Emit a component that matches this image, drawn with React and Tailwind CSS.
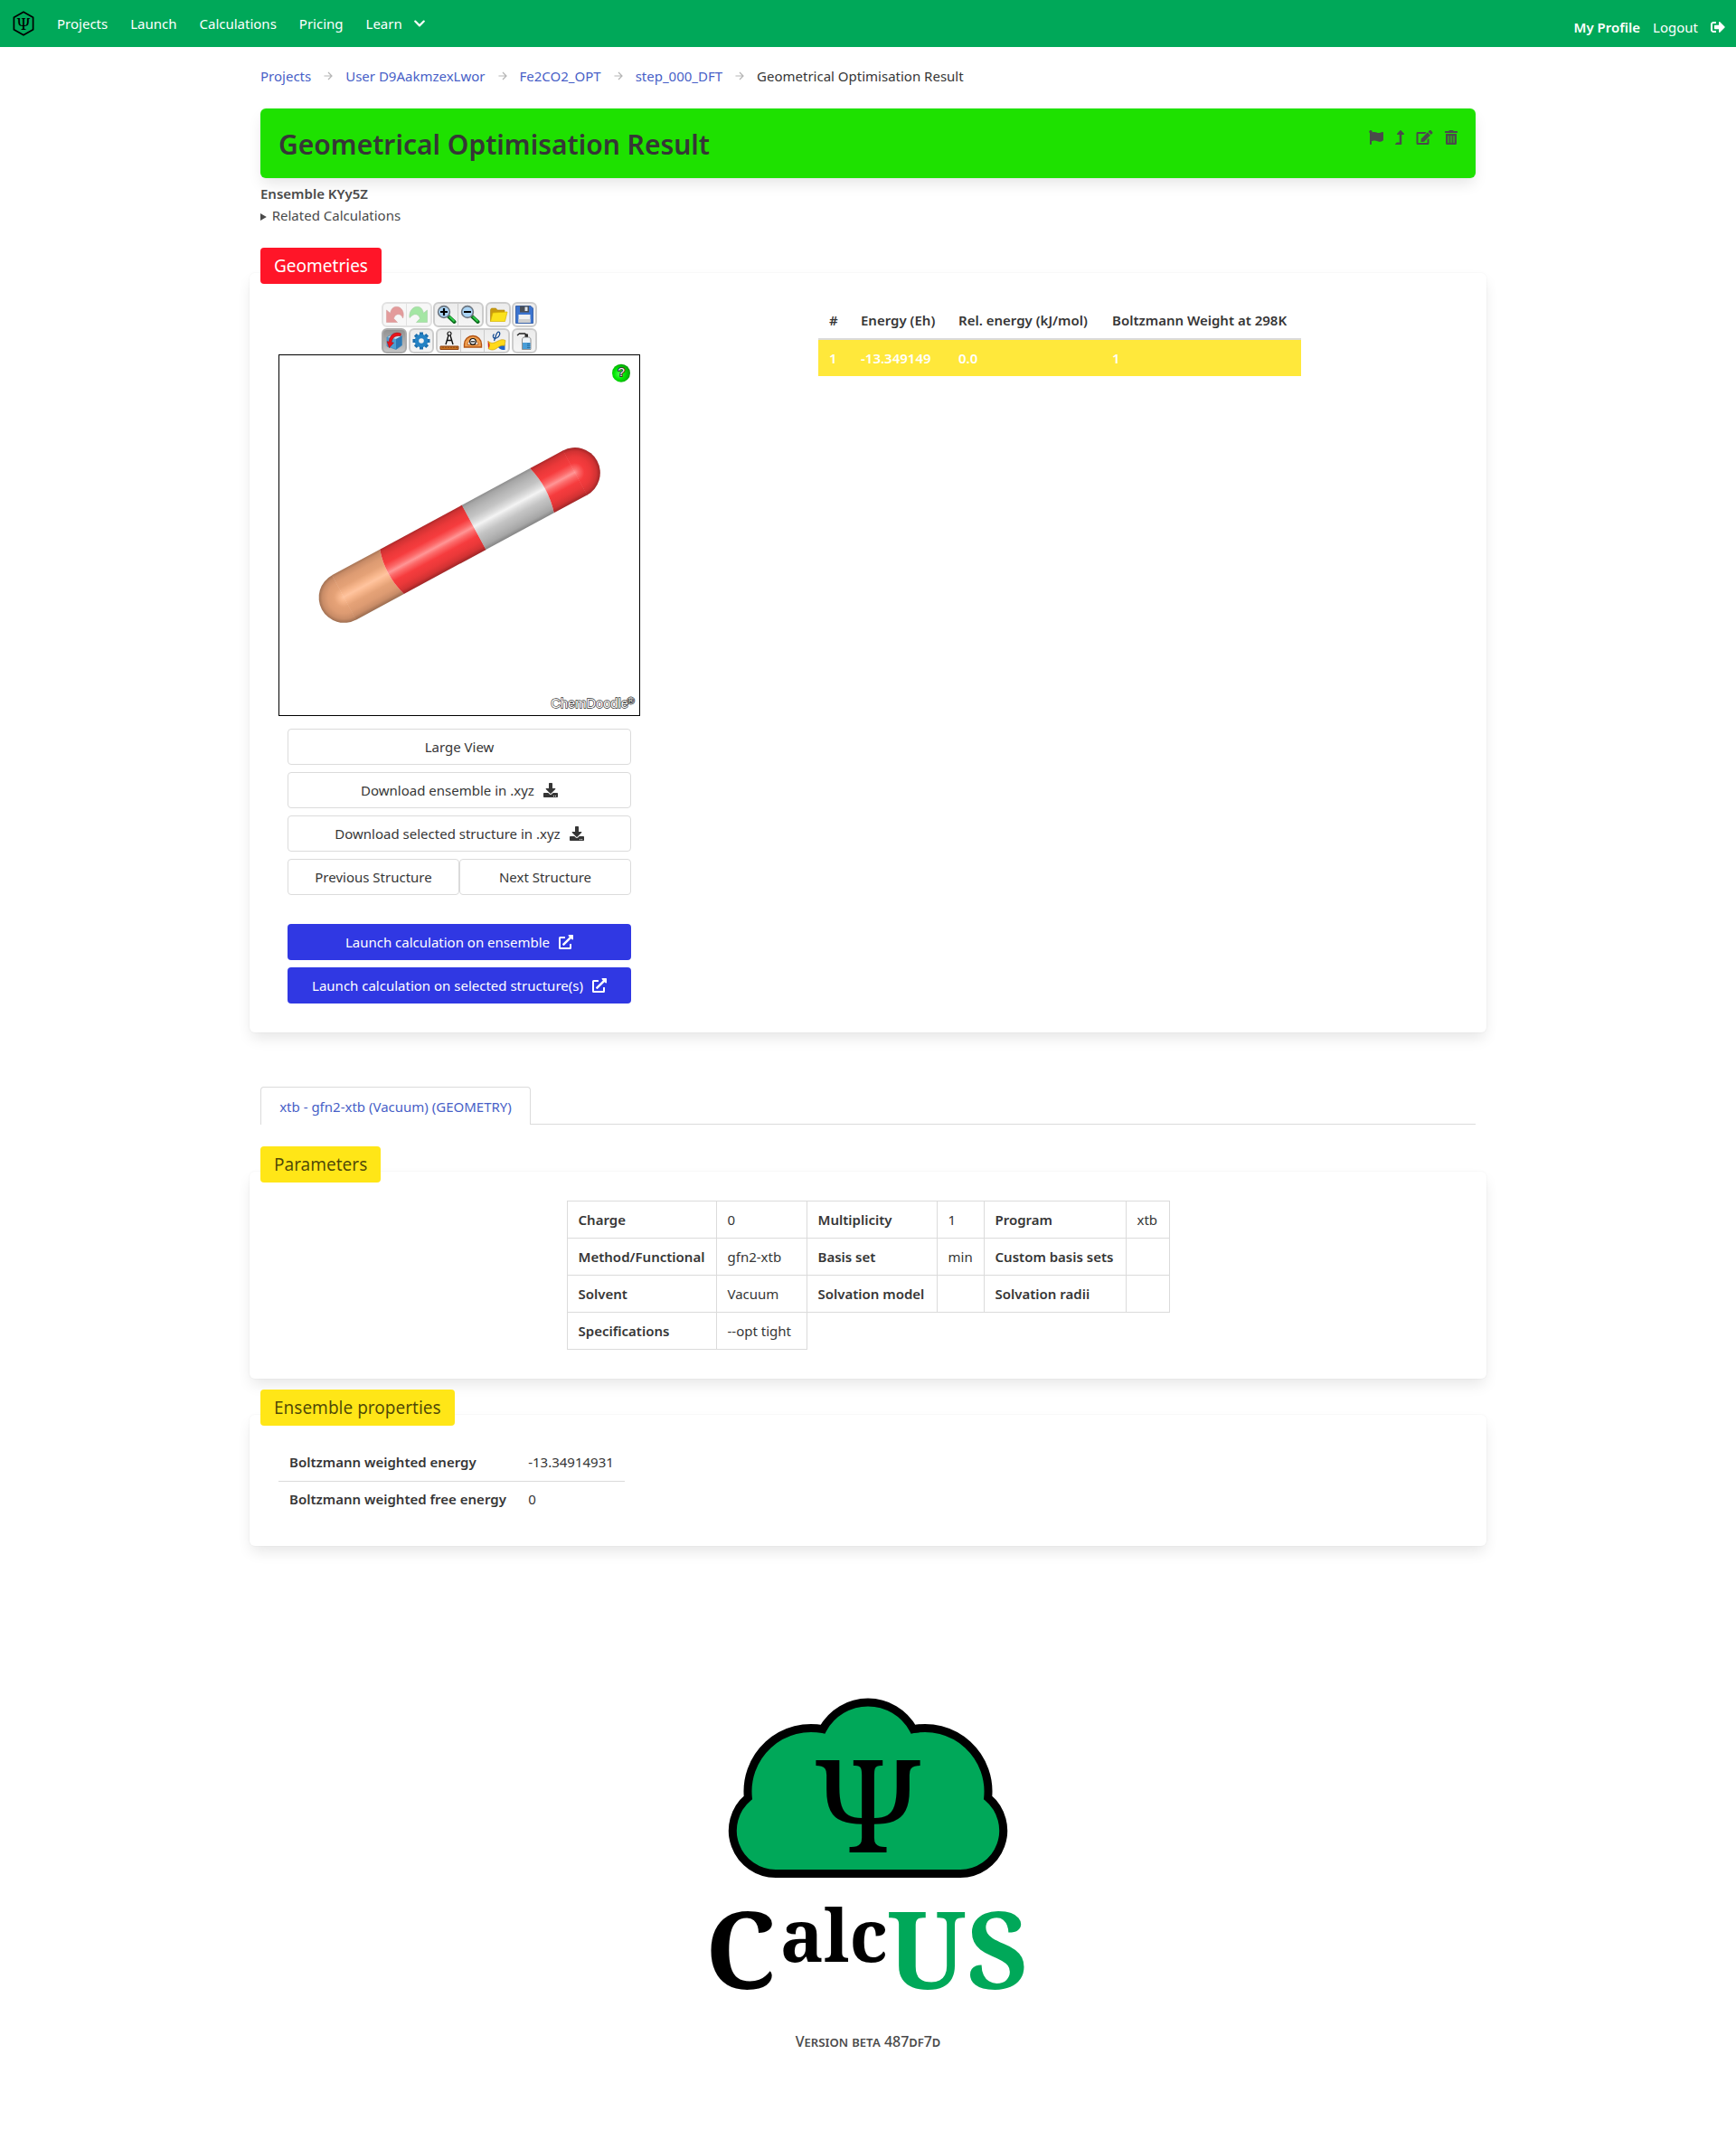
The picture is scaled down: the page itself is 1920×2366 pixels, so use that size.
import React from "react";
import {
  FaChevronDown,
  FaDownload,
  FaEdit,
  FaExternalLinkAlt,
  FaFlag,
  FaLevelUpAlt,
  FaSignOutAlt,
  FaTrashAlt,
} from "react-icons/fa";

function NavLogo() {
  return (
    <svg viewBox="0 0 24 28" className="h-7 w-6" aria-hidden="true">
      <path d="M12 1.2 22.6 7.3V20.700L12 26.800 1.400 20.700V7.300Z" fill="none" stroke="#000" strokeWidth="1.700" strokeLinejoin="round" />
      <text x="12" y="20.500" textAnchor="middle" fontSize="18" fontFamily="Noto Serif, Liberation Serif, serif">Ψ</text>
    </svg>
  );
}

function UndoIcon() {
  return (
    <svg viewBox="0 0 22 22" className="size-[22px] opacity-45">
      <path d="M1.500 6v13.500h12l-4-4.200c.8-3.300 3-5 5.800-4.600 2.200.4 3.600 2 4.200 4.300C22 8.500 18 1.700 11.800 2.300 8.500 2.600 6.300 5.500 5.600 9.400Z" fill="#c92b2b" stroke="#a33" strokeWidth=".6" />
    </svg>
  );
}

function RedoIcon() {
  return (
    <svg viewBox="0 0 22 22" className="size-[22px] opacity-45">
      <path d="M20.500 6v13.500h-12l4-4.200c-.8-3.300-3-5-5.800-4.600C4.500 11.100 3.100 12.700 1 14.500 0 8.500 4 1.700 10.200 2.300c3.300.3 5.500 3.200 6.200 7.100Z" fill="#3fd03f" stroke="#3a9a3a" strokeWidth=".6" />
    </svg>
  );
}

function ZoomIcon({ plus }) {
  return (
    <svg viewBox="0 0 22 22" className="size-[22px]">
      <path d="m13 13 6.500 6" stroke="#0b6b1c" strokeWidth="4" strokeLinecap="round" />
      <path d="m14.500 13.700 4.500 4.300" stroke="#2fd04a" strokeWidth="1.800" strokeLinecap="round" />
      <circle cx="8" cy="8" r="6.400" fill="#a9d4f5" stroke="#6d7680" strokeWidth="1.600" />
      <path d={plus ? "M8 4v8M4 8h8" : "M4 8h8"} stroke="#000" strokeWidth="2.200" />
    </svg>
  );
}

function FolderIcon() {
  return (
    <svg viewBox="0 0 22 22" className="size-[22px]">
      <path d="M2.500 18.500V5.500l1-1.500h5l1.500 2H18v3" fill="#c79a10" stroke="#b08400" strokeWidth=".6" />
      <path d="m5 9 16-1-2.500 10.500h-16Z" fill="#fbe21b" stroke="#d8b400" strokeWidth=".7" />
    </svg>
  );
}

function SaveIcon() {
  return (
    <svg viewBox="0 0 22 22" className="size-[22px]">
      <path d="M1.500 1.500h16.500l2.500 2.500v16.500h-19Z" fill="#3c74cf" stroke="#24519e" strokeWidth=".8" />
      <path d="M6 1.500h10V8.500H6Z" fill="#4a4f57" />
      <path d="M11.500 2.500h3v4.500h-3Z" fill="#dfe6ee" />
      <path d="M4.500 11h13v9h-13Z" fill="#f1f1f1" />
      <path d="M4.500 16h13v4h-13Z" fill="#cfcfcf" />
    </svg>
  );
}

function RotateIcon() {
  return (
    <svg viewBox="0 0 22 22" className="size-[22px]">
      <path d="m3 7 7-4 9.500 2.500-6.500 3.500Z" fill="#bfe3f5" />
      <path d="m3 7 10 2v11.500L3 17Z" fill="#4d9fd3" />
      <path d="m13 9 6.500-3.500V16L13 20.500Z" fill="#2c78b5" />
      <path d="m3 7 7-4 9.500 2.500V16L13 20.500 3 17Z" fill="none" stroke="#3d86ba" strokeWidth=".7" />
      <path d="M18.500 3C11.500 0 5.500 5 5.300 12l-2.300-.3 2.500 7 5-5.700-2.500-.3C8.500 8 12.500 4.500 18 5.700Z" fill="#e8141c" stroke="#a30b10" strokeWidth=".5" />
    </svg>
  );
}

function GearIcon() {
  return (
    <svg viewBox="0 0 22 22" className="size-[22px]">
      <g stroke="#1d6fae" strokeWidth="4">
        <path d="M11 1.500v19M1.500 11h19M4.300 4.300l13.400 13.400M17.700 4.300 4.300 17.700" />
      </g>
      <circle cx="11" cy="11" r="7.300" fill="#2482c4" />
      <circle cx="11" cy="11" r="2.800" fill="#f1f1f1" />
    </svg>
  );
}

function DistanceIcon() {
  return (
    <svg viewBox="0 0 22 22" className="size-[22px]">
      <path d="M1 17h20v3.500H1Z" fill="#c87222" stroke="#8f4310" strokeWidth="1" />
      <path d="M4 17.500v1.500M7 17.500v1.500M10 17.500v1.500M13 17.500v1.500M16 17.500v1.500M19 17.500v1.500" stroke="#5f2d08" strokeWidth=".7" />
      <path d="M10 5 7 15M12 5 15 15M8.500 10.500h5" fill="none" stroke="#111" strokeWidth="1.400" />
      <circle cx="11" cy="3" r="2" fill="#fff" stroke="#111" strokeWidth="1.200" />
    </svg>
  );
}

function AngleIcon() {
  return (
    <svg viewBox="0 0 22 22" className="size-[22px]">
      <path d="M1.500 18v-3a9.500 9.500 0 0 1 19 0v3Z" fill="#f0a050" stroke="#b35312" strokeWidth="1.400" />
      <path d="M5 15.500a6 6 0 0 1 12 0Z" fill="#f8f1e8" stroke="#b35312" strokeWidth=".8" />
      <circle cx="11" cy="11.800" r="3.300" fill="#fff" stroke="#111" strokeWidth="1.200" />
      <path d="M8.800 11.800h4.400" stroke="#111" strokeWidth="1.200" />
    </svg>
  );
}

function TorsionIcon() {
  return (
    <svg viewBox="0 0 22 22" className="size-[22px]">
      <path d="m1.500 11 3.500 4-3 5.500Z" fill="#d81e1e" />
      <path d="M11 15h9.500v6c-4 .5-7-1-9.500-6Z" fill="#1f63c9" />
      <path d="M2 11.500c4 3 6 2 10 0s6-2.500 9-1l-1 6c-4-1-6 1-9 3s-6 2-9 0c2-2 2-5 0-8Z" fill="#ffd91a" stroke="#c79a00" strokeWidth=".6" />
      <path d="M8.500 3.500C6 6 7.500 9 11 8s5-6.500 2.500-6.800S10.500 6 8.500 11" fill="none" stroke="#164c92" strokeWidth="1.300" />
    </svg>
  );
}

function BottleIcon() {
  return (
    <svg viewBox="0 0 22 22" className="size-[22px]">
      <path d="M3 5 5.500 3h6l2 1.500" fill="none" stroke="#222" strokeWidth="1.300" />
      <path d="M11.500 3.500h3.500v3.500h-3.500Z" fill="#2c2c2c" />
      <path d="M8.500 10c0-2 1-3 2.500-3h4.500c1.500 0 2.500 1 2.500 3v10.500H8.500Z" fill="#eef3f7" stroke="#777" strokeWidth=".8" />
      <path d="M9 13h8.500v7H9Z" fill="#4a9ed8" />
      <path d="M14 14.500h3.500M14 16.500h3.500M14 18.500h3.500" stroke="#1d5c8c" strokeWidth=".7" />
    </svg>
  );
}

function ToolGroup({ tools, active, disabled }) {
  return (
    <div
      className={
        "flex h-7 divide-x overflow-hidden rounded-[6px] border-2 " +
        (active
          ? "border-[#ababab] bg-linear-to-b from-[#929292] to-[#c6c6c6]"
          : disabled
            ? "border-[#e2e2e2] divide-[#e2e2e2] bg-[#f7f7f7]"
            : "border-[#cccccc] divide-[#cccccc] bg-linear-to-b from-[#ececec] to-[#f5f5f5]")
      }
    >
      {tools.map(([label, icon]) => (
        <button key={label} type="button" aria-label={label} title={label} disabled={disabled} className="flex h-6 w-[26px] items-center justify-center only:w-6">
          {icon}
        </button>
      ))}
    </div>
  );
}

function Toolbar() {
  return (
    <div className="mx-auto flex w-[172px] flex-col gap-px pb-px">
      <div className="flex justify-between">
        <ToolGroup disabled tools={[["Undo", <UndoIcon />], ["Redo", <RedoIcon />]]} />
        <ToolGroup tools={[["Zoom in", <ZoomIcon plus />], ["Zoom out", <ZoomIcon />]]} />
        <ToolGroup tools={[["Open", <FolderIcon />]]} />
        <ToolGroup tools={[["Save", <SaveIcon />]]} />
      </div>
      <div className="flex justify-between">
        <ToolGroup active tools={[["Rotate", <RotateIcon />]]} />
        <ToolGroup tools={[["Settings", <GearIcon />]]} />
        <ToolGroup tools={[["Distance", <DistanceIcon />], ["Angle", <AngleIcon />], ["Torsion", <TorsionIcon />]]} />
        <ToolGroup tools={[["Clean", <BottleIcon />]]} />
      </div>
    </div>
  );
}

const tones = {
  red: ["#ff9696", "#fc6a6a", "#f63c3e", "#ea3839", "#d23233", "#a02627", "#5c2020"],
  grey: ["#f4f4f4", "#dedede", "#c4c4c4", "#b5b5b5", "#a6a6a6", "#858585", "#4c4c4c"],
  tan: ["#ffc49f", "#f8b78d", "#e5a277", "#dd9b72", "#c98c67", "#9c6d50", "#5f4638"],
};
const stops = [0, 0.14, 0.36, 0.6, 0.8, 0.95, 1];

function Molecule() {
  return (
    <svg viewBox="57 39 1194 1194" className="block w-full border border-black bg-white" role="img" aria-label="Molecule viewer">
      <defs>
        {Object.entries(tones).map(([name, c]) => (
          <React.Fragment key={name}>
            <linearGradient id={`cyl-${name}`} gradientUnits="userSpaceOnUse" x1="0" y1="-2" x2="0" y2="88" spreadMethod="reflect">
              {c.map((color, i) => (
                <stop key={color} offset={stops[i]} stopColor={color} />
              ))}
            </linearGradient>
            <radialGradient id={`cap-${name}`} gradientUnits="userSpaceOnUse" cx="0" cy="0" fx="0" fy="-2" r="89">
              {c.map((color, i) => (
                <stop key={color} offset={stops[i]} stopColor={color} />
              ))}
            </radialGradient>
          </React.Fragment>
        ))}
        <radialGradient id="help" cx="40%" cy="55%" r="60%">
          <stop offset="0" stopColor="#4dff4d" />
          <stop offset="0.500" stopColor="#00e600" />
          <stop offset="1" stopColor="#0a9a0a" />
        </radialGradient>
      </defs>
      <g transform="translate(271 843) rotate(-28.36)">
        <path d="M1-84A84 84 0 0 0 1 84Z" fill="url(#cap-tan)" />
        <path d="M0-84H181Q155 0 181 84H0Z" fill="url(#cyl-tan)" />
        <path d="M181-84H491V84H181Q155 0 181-84Z" fill="url(#cyl-red)" />
        <path d="M490-84H747Q771 0 747 84H490Z" fill="url(#cyl-grey)" />
        <path d="M747-84H872V84H747Q771 0 747-84Z" fill="url(#cyl-red)" />
        <g transform="translate(871 0)">
          <path d="M0-84A84 84 0 0 1 0 84Z" fill="url(#cap-red)" />
        </g>
      </g>
      <circle cx="1191" cy="98" r="30" fill="url(#help)" />
      <g fontFamily="Liberation Sans, sans-serif" fill="#fff" stroke="#333" strokeWidth="4" paintOrder="stroke">
        <text x="1192" y="107" textAnchor="middle" fontSize="40" strokeWidth="6">?</text>
        <text x="958" y="1209" fontSize="44">ChemDoodle</text>
        <text x="1211" y="1198" fontSize="32" stroke="#222">®</text>
      </g>
    </svg>
  );
}

function FooterLogo() {
  return (
    <svg viewBox="60 30 1080 1140" className="w-[360px]" role="img" aria-label="CalcUS">
      <path
        d="M295 637.500A143 143 0 0 1 202 385A210 210 0 0 1 450 158A171 171 0 0 1 750 158A210 210 0 0 1 998 385A143 143 0 0 1 905 637.500Z"
        fill="#00a859"
        stroke="#000"
        strokeWidth="27"
        strokeLinejoin="miter"
      />
      <g fontFamily="Noto Serif, Liberation Serif, serif">
        <text x="600" y="568" textAnchor="middle" fontSize="430">Ψ</text>
        <g fontWeight="700">
          <text x="60" y="1020" fontSize="352">C</text>
          <text x="308" y="930" fontSize="242">alc</text>
          <text x="664" y="1020" fontSize="352" fill="#00a859">US</text>
        </g>
      </g>
    </svg>
  );
}

const crumbs = ["Projects", "User D9AakmzexLwor", "Fe2CO2_OPT", "step_000_DFT"];

function Card({ title, tone, children }) {
  return (
    <section className="flex flex-col rounded-md bg-white px-3 pb-8 shadow-[0_8px_16px_-2px_rgba(10,10,10,0.1),0_0_0_1px_rgba(10,10,10,0.02)]">
      <h2 className={"-mt-7 mb-5 flex h-10 items-center self-start rounded-[4px] px-[15px] text-[19px] " + tone}>{title}</h2>
      <div className="px-5">{children}</div>
    </section>
  );
}

const plainButton = "flex h-10 w-full items-center justify-center gap-2.5 rounded-[4px] border border-[#dbdbdb] bg-white text-[#363636]";
const blueButton = "flex h-10 w-full items-center justify-center gap-2.5 rounded-[4px] bg-[#3038e3] text-white";

const params = [
  ["Charge", "0", "Multiplicity", "1", "Program", "xtb"],
  ["Method/Functional", "gfn2-xtb", "Basis set", "min", "Custom basis sets", ""],
  ["Solvent", "Vacuum", "Solvation model", "", "Solvation radii", ""],
  ["Specifications", "--opt tight"],
];

export default function App() {
  return (
    <div className="bg-white font-['Noto_Sans',sans-serif] text-[15px] leading-6 text-[#4a4a4a]">
      <nav className="flex h-13 items-center justify-between bg-[#00a859] pr-3 pl-3.5 text-white">
        <div className="flex items-center gap-[25px]">
          <a href="#home" aria-label="Home"><NavLogo /></a>
          <a href="#projects">Projects</a>
          <a href="#launch">Launch</a>
          <a href="#calculations">Calculations</a>
          <a href="#pricing">Pricing</a>
          <a href="#learn" className="flex items-center gap-3">Learn <FaChevronDown className="size-3.5" /></a>
        </div>
        <div className="flex items-center gap-3.5 pt-2">
          <a href="#profile" className="font-semibold">My Profile</a>
          <a href="#logout" className="flex items-center gap-3.5">Logout <FaSignOutAlt className="size-4" /></a>
        </div>
      </nav>

      <main className="mx-auto max-w-[1368px] px-3">
        <nav aria-label="Breadcrumb" className="pt-5">
          <ol className="flex items-center gap-3.5">
            {crumbs.map((c) => (
              <li key={c} className="flex items-center gap-3.5">
                <a href="#crumb" className="text-[#485fc7]">{c}</a>
                <svg viewBox="0 0 10 10" className="size-2.5" aria-hidden="true">
                  <path d="M.5 5h8.500M5 1 9 5 5 9" fill="none" stroke="#b5b5b5" strokeWidth="1.200" />
                </svg>
              </li>
            ))}
            <li className="text-[#363636]" aria-current="page">Geometrical Optimisation Result</li>
          </ol>
        </nav>

        <header className="mt-6 flex h-[77px] justify-between rounded-md bg-[#1ee100] px-5 shadow-[0_8px_16px_-2px_rgba(10,10,10,0.1),0_0_0_1px_rgba(10,10,10,0.02)]">
          <h1 className="pt-[22px] text-[30px] leading-9 font-semibold text-[#363636]">Geometrical Optimisation Result</h1>
          <div className="flex h-4 gap-[13px] pt-6">
            <button type="button" aria-label="Flag"><FaFlag className="size-4" /></button>
            <button type="button" aria-label="Go up"><FaLevelUpAlt className="h-4 w-2.5" /></button>
            <button type="button" aria-label="Edit"><FaEdit className="h-4 w-[19px]" /></button>
            <button type="button" aria-label="Delete"><FaTrashAlt className="h-4 w-3.5" /></button>
          </div>
        </header>

        <p className="mt-[5px] font-semibold">Ensemble KYy5Z</p>
        <details>
          <summary className="marker:text-xs">Related Calculations</summary>
        </details>

        <div className="-mx-3 mt-[52px]">
          <Card title="Geometries" tone="bg-[#ff1528] text-white">
            <div className="flex items-start gap-[197px]">
              <div className="w-[400px]">
                <Toolbar />
                <Molecule />
                <div className="mt-3.5 flex flex-col gap-2 px-2.5">
                  <button type="button" className={plainButton}>Large View</button>
                  <button type="button" className={plainButton}>Download ensemble in .xyz <FaDownload className="size-4" /></button>
                  <button type="button" className={plainButton}>Download selected structure in .xyz <FaDownload className="size-4" /></button>
                  <div className="flex">
                    <button type="button" className={plainButton}>Previous Structure</button>
                    <button type="button" className={plainButton}>Next Structure</button>
                  </div>
                  <button type="button" className={blueButton + " mt-6"}>Launch calculation on ensemble <FaExternalLinkAlt className="size-4" /></button>
                  <button type="button" className={blueButton}>Launch calculation on selected structure(s) <FaExternalLinkAlt className="size-4" /></button>
                </div>
              </div>
              <table className="w-[534px] table-fixed text-left whitespace-nowrap">
                <colgroup>
                  <col className="w-[35px]" />
                  <col className="w-[108px]" />
                  <col className="w-[170px]" />
                  <col />
                </colgroup>
                <thead>
                  <tr className="h-[41px] border-b-2 border-[#dbdbdb] text-[#363636]">
                    <th className="px-3 font-semibold">#</th>
                    <th className="px-3 font-semibold">Energy (Eh)</th>
                    <th className="px-3 font-semibold">Rel. energy (kJ/mol)</th>
                    <th className="px-3 font-semibold">Boltzmann Weight at 298K</th>
                  </tr>
                </thead>
                <tbody>
                  <tr className="h-[41px] bg-[#ffe83b] font-semibold text-white">
                    <td className="px-3">1</td>
                    <td className="px-3">-13.349149</td>
                    <td className="px-3">0.0</td>
                    <td className="px-3">1</td>
                  </tr>
                </tbody>
              </table>
            </div>
          </Card>
        </div>

        <div className="mt-15 flex border-b border-[#dbdbdb]">
          <a href="#geometry" className="-mb-px flex h-[42px] w-[299px] items-center justify-center rounded-t-[4px] border border-b-0 border-[#dbdbdb] bg-white text-[#485fc7]">
            xtb - gfn2-xtb (Vacuum) (GEOMETRY)
          </a>
        </div>

        <div className="-mx-3 mt-13">
          <Card title="Parameters" tone="bg-[#ffe617] text-black/70">
            <table className="mx-auto w-[666px] table-fixed border-collapse whitespace-nowrap text-[#363636]">
              <colgroup>
                <col className="w-[165px]" />
                <col className="w-[100px]" />
                <col className="w-[144px]" />
                <col className="w-[52px]" />
                <col className="w-[157px]" />
                <col className="w-12" />
              </colgroup>
              <tbody>
                {params.map((row) => (
                  <tr key={row[0]} className="h-[41px]">
                    {row.map((cell, i) =>
                      i % 2 === 0 ? (
                        <th key={i} className="border border-[#dbdbdb] px-3 text-left font-semibold">{cell}</th>
                      ) : (
                        <td key={i} className="border border-[#dbdbdb] px-3">{cell}</td>
                      )
                    )}
                  </tr>
                ))}
              </tbody>
            </table>
          </Card>
        </div>

        <div className="-mx-3 mt-10">
          <Card title="Ensemble properties" tone="bg-[#ffe617] text-black/70">
            <table className="w-[383px] text-left text-[#363636]">
              <tbody>
                <tr className="h-[41px] border-b border-[#dbdbdb]">
                  <th className="px-3 font-semibold">Boltzmann weighted energy</th>
                  <td className="px-3">-13.34914931</td>
                </tr>
                <tr className="h-10">
                  <th className="px-3 font-semibold">Boltzmann weighted free energy</th>
                  <td className="px-3">0</td>
                </tr>
              </tbody>
            </table>
          </Card>
        </div>
      </main>

      <footer className="mt-40 flex flex-col items-center pb-24">
        <FooterLogo />
        <p className="-mt-1 text-base font-medium [font-variant:small-caps]">Version beta 487df7d</p>
      </footer>
    </div>
  );
}
